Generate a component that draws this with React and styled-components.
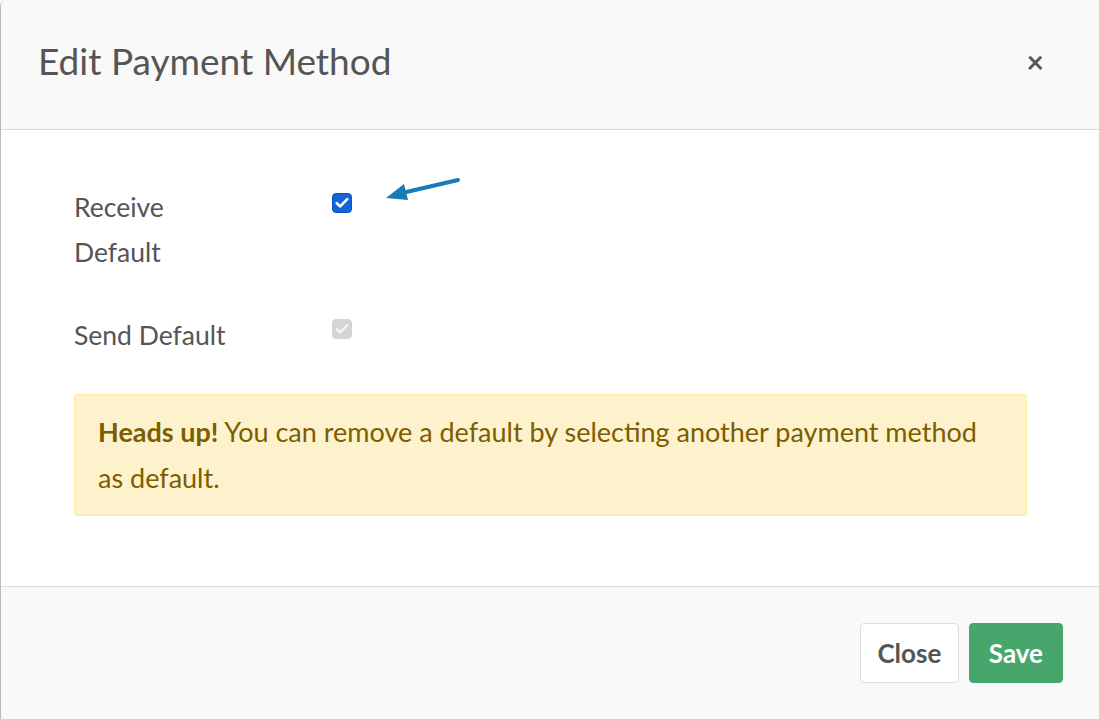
import React from "react";
import styled, { createGlobalStyle } from "styled-components";

const Global = createGlobalStyle`
  html, body { margin: 0; padding: 0; background: #fff; }
  body { font-family: Lato, "Open Sans", sans-serif; }
`;

const Modal = styled.div`
  width: 1099px;
  height: 719px;
  box-sizing: border-box;
  border-left: 1px solid #bcbcbc;
  border-top-left-radius: 6px;
  display: flex;
  flex-direction: column;
  overflow: hidden;
  color: #555;
`;

const Header = styled.div`
  height: 129px;
  flex: none;
  background: #f9f9f9;
  border-bottom: 1px solid #dcdcdc;
  display: flex;
  align-items: center;
  justify-content: space-between;
  padding: 0 55px 0 37px;
`;

const Title = styled.h1`
  margin: 0;
  font-size: 37px;
  font-weight: 400;
  color: #555;
  position: relative;
  top: -4px;
`;

const CloseX = styled.button`
  border: none;
  background: none;
  font-size: 30px;
  font-weight: 700;
  color: #555;
  padding: 0;
  font-family: inherit;
  position: relative;
  top: -4px;
`;

const Body = styled.div`
  flex: 1;
  background: #fff;
  padding: 55px 72px 0 73px;
`;

const Row = styled.div`
  display: grid;
  grid-template-columns: 258px 1fr;
  margin-bottom: ${(p) => p.$gap || 0}px;
`;

const Label = styled.div`
  font-size: 26.5px;
  line-height: 45px;
  color: #555;
  width: ${(p) => p.$w || "auto"};
`;

const CheckCell = styled.div`
  position: relative;
  padding-top: ${(p) => p.$top}px;
`;

const Box = styled.span`
  display: inline-flex;
  align-items: center;
  justify-content: center;
  width: 20px;
  height: 20px;
  border-radius: 4px;
  background: ${(p) => (p.$disabled ? "#d4d4d4" : "#1264d8")};
  box-sizing: border-box;
  border: 1px solid ${(p) => (p.$disabled ? "#d4d4d4" : "#0a56c2")};
`;

const Arrow = styled.svg`
  position: absolute;
  left: 52px;
  top: -14px;
`;

const Alert = styled.div`
  margin-top: 36px;
  background: #fef2cc;
  border: 1px solid #fde9a4;
  border-radius: 3px;
  color: #7c5d00;
  font-size: 27px;
  line-height: 46px;
  padding: 14px 36px 14px 23px;
`;

const Footer = styled.div`
  height: 132px;
  flex: none;
  background: #f9f9f9;
  border-top: 1px solid #dcdcdc;
  display: flex;
  align-items: center;
  justify-content: flex-end;
  gap: 10px;
  padding: 0 36px 0 0;
`;

const Button = styled.button`
  height: 60px;
  padding: 0 ${(p) => (p.$primary ? 19 : 16.5)}px;
  border-radius: 4px;
  font-family: inherit;
  font-size: 26px;
  font-weight: 700;
  border: 1px solid ${(p) => (p.$primary ? "#45a56a" : "#dedede")};
  background: ${(p) => (p.$primary ? "#46a66b" : "#fff")};
  color: ${(p) => (p.$primary ? "#fff" : "#555")};
`;

const Tick = ({ color }) => (
  <svg width="14" height="12" viewBox="0 0 14 12">
    <path d="M1.8 6.2 L5.2 9.4 L12.2 2.2" fill="none" stroke={color} strokeWidth="2.6" strokeLinecap="round" strokeLinejoin="round" />
  </svg>
);

export default function App() {
  return (
    <>
      <Global />
      <Modal>
        <Header>
          <Title>Edit Payment Method</Title>
          <CloseX>×</CloseX>
        </Header>
        <Body>
          <Row $gap={38}>
            <Label $w="110px">Receive Default</Label>
            <CheckCell $top={8}>
              <Box>
                <Tick color="#fff" />
              </Box>
              <Arrow width="90" height="40" viewBox="0 0 90 40">
                <line x1="74" y1="9" x2="18" y2="22" stroke="#1a7ab8" strokeWidth="4" strokeLinecap="round" />
                <polygon points="2,27 20,13 24,29" fill="#1a7ab8" />
              </Arrow>
            </CheckCell>
          </Row>
          <Row>
            <Label>Send Default</Label>
            <CheckCell $top={6}>
              <Box $disabled>
                <Tick color="#f4f4f4" />
              </Box>
            </CheckCell>
          </Row>
          <Alert>
            <b>Heads up!</b> You can remove a default by selecting another payment method as default.
          </Alert>
        </Body>
        <Footer>
          <Button>Close</Button>
          <Button $primary>Save</Button>
        </Footer>
      </Modal>
    </>
  );
}
